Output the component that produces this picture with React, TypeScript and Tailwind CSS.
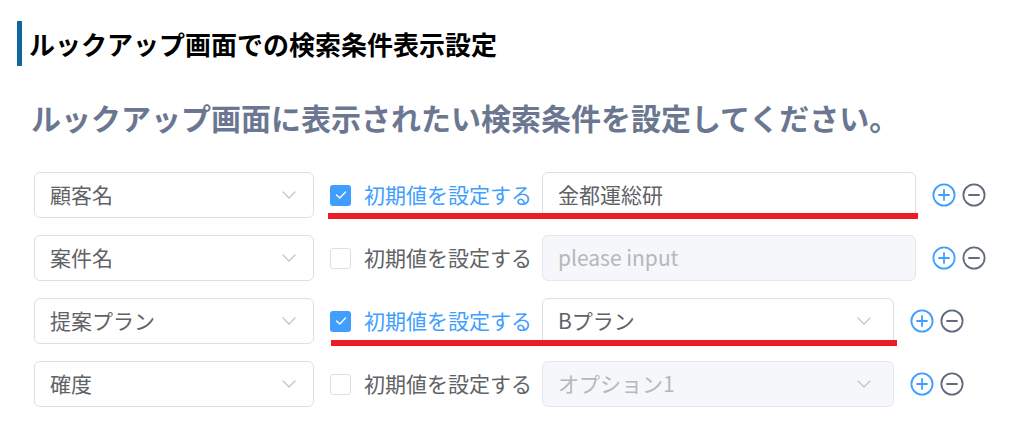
import React from "react";

const Chevron = () => (
  <svg width="14" height="8" viewBox="0 0 14 8" fill="none">
    <path d="M1 1 L7 7 L13 1" stroke="#c0c4cc" strokeWidth="1.3" strokeLinecap="round" strokeLinejoin="round" />
  </svg>
);

const Plus = () => (
  <svg width="24" height="24" viewBox="0 0 24 24" fill="none">
    <circle cx="12" cy="12" r="10.6" stroke="#409eff" strokeWidth="1.8" />
    <path d="M12 7 V17 M7 12 H17" stroke="#409eff" strokeWidth="1.8" strokeLinecap="round" />
  </svg>
);

const Minus = () => (
  <svg width="24" height="24" viewBox="0 0 24 24" fill="none">
    <circle cx="12" cy="12" r="10.6" stroke="#5f6b7e" strokeWidth="1.8" />
    <path d="M7 12 H17" stroke="#5f6b7e" strokeWidth="1.8" strokeLinecap="round" />
  </svg>
);

const Checkbox = ({ checked }: { checked: boolean }) =>
  checked ? (
    <div className="w-[21px] h-[21px] rounded-[3px] bg-[#409eff] flex items-center justify-center shrink-0">
      <svg width="12" height="10" viewBox="0 0 12 10" fill="none">
        <path d="M1.5 5 L4.8 8 L10.5 2" stroke="white" strokeWidth="1.4" strokeLinecap="round" strokeLinejoin="round" />
      </svg>
    </div>
  ) : (
    <div className="w-[21px] h-[21px] rounded-[3px] border border-[#dcdfe6] bg-white shrink-0" />
  );

type Row = {
  field: string;
  checked: boolean;
  kind: "input" | "select";
  value: string;
  disabled: boolean;
  red?: { left: number; top: number; width: number };
};

const rows: Row[] = [
  { field: "顧客名", checked: true, kind: "input", value: "金都運総研", disabled: false, red: { left: 294, top: 41, width: 590 } },
  { field: "案件名", checked: false, kind: "input", value: "please input", disabled: true },
  { field: "提案プラン", checked: true, kind: "select", value: "Bプラン", disabled: false, red: { left: 297, top: 42, width: 566 } },
  { field: "確度", checked: false, kind: "select", value: "オプション1", disabled: true },
];

export default function App() {
  return (
    <div className="w-[1033px] h-[438px] bg-white overflow-hidden font-['Noto_Sans_CJK_JP',sans-serif]">
      <div className="pt-[21px] pl-[17px]">
        <div className="flex items-center h-[45px] border-l-[5px] border-[#10679f] pl-[7px] text-[26px] font-bold text-black leading-none tracking-[0px]">
          ルックアップ画面での検索条件表示設定
        </div>
      </div>
      <div className="mt-[33px] pl-[31px] text-[30px] leading-[36px] font-bold text-[#6b7790]">
        ルックアップ画面に表示されたい検索条件を設定してください。
      </div>
      <div className="mt-[37px] pl-[34px] flex flex-col gap-[17px]">
        {rows.map((r, i) => (
          <div key={i} className="relative flex items-center h-[46px] text-[21px]">
            <div className="w-[280px] h-[46px] border border-[#dcdfe6] rounded-[6px] bg-white pl-[15px] pr-[17px] flex items-center justify-between text-[#606266] shrink-0">
              <span>{r.field}</span>
              <Chevron />
            </div>
            <div className="ml-[16px]">
              <Checkbox checked={r.checked} />
            </div>
            <span className={`ml-[13px] w-[166px] whitespace-nowrap ${r.checked ? "text-[#409eff]" : "text-[#606266]"}`}>
              初期値を設定する
            </span>
            <div
              className={`ml-[12px] h-[46px] rounded-[6px] border flex items-center justify-between pl-[15px] pr-[22px] shrink-0 ${
                r.kind === "input" ? "w-[374px]" : "w-[352px]"
              } ${r.disabled ? "bg-[#f5f7fa] border-[#e4e7ed] text-[#b4b7bd]" : "bg-white border-[#dcdfe6] text-[#606266]"}`}
            >
              <span>{r.value}</span>
              {r.kind === "select" && <Chevron />}
            </div>
            <div className="ml-[16px] flex items-center gap-[6px]">
              <Plus />
              <Minus />
            </div>
            {r.red && (
              <div
                className="absolute h-[6px] bg-[#ed1c24]"
                style={{ left: r.red.left, top: r.red.top, width: r.red.width }}
              />
            )}
          </div>
        ))}
      </div>
    </div>
  );
}
